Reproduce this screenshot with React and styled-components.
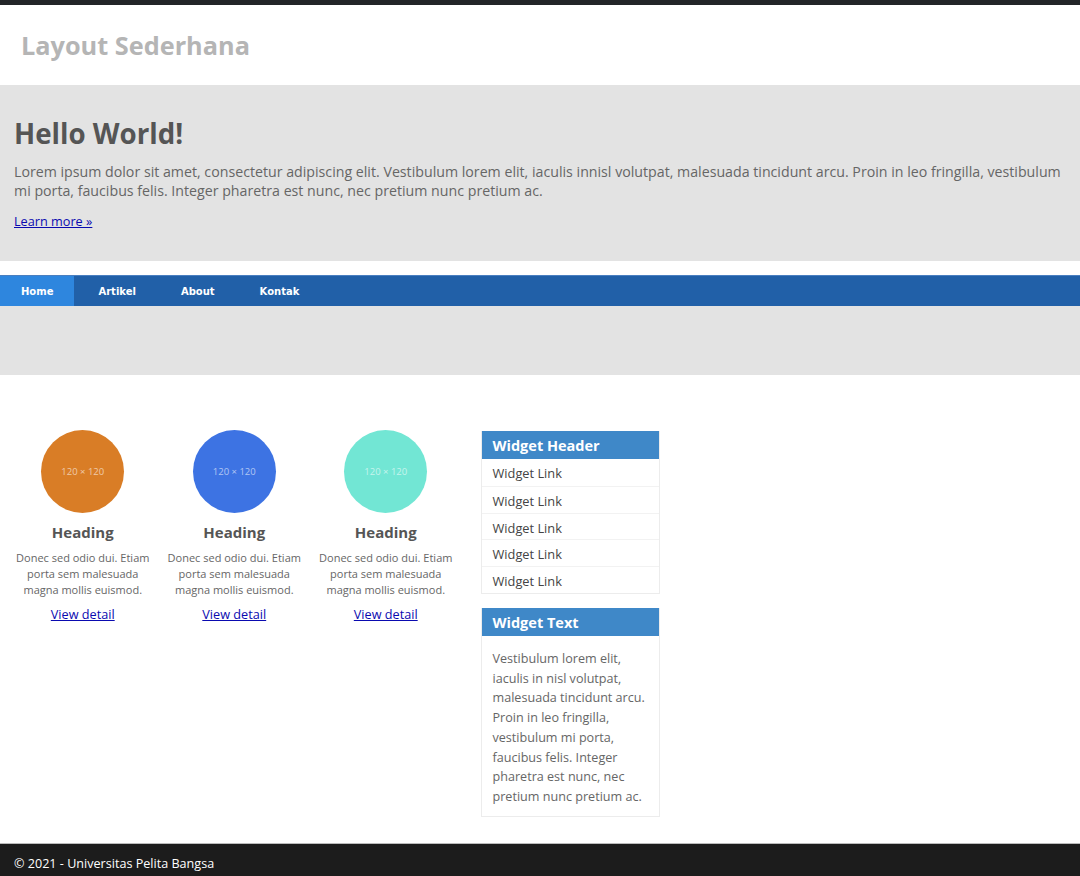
import React from "react";
import styled, { createGlobalStyle } from "styled-components";

const Global = createGlobalStyle`
  html, body { margin: 0; padding: 0; background: #fff; }
  body { font-family: "Open Sans", "Liberation Sans", sans-serif; color: #555; }
  * { box-sizing: border-box; }
`;

const Page = styled.div`
  border-top: 5px solid #222528;
  min-height: 876px;
  display: flex;
  flex-direction: column;
`;

const Header = styled.header`
  height: 80px;
  display: flex;
  align-items: center;
  padding-left: 21px;
`;

const SiteTitle = styled.h1`
  margin: 0;
  font-size: 25.3px;
  font-weight: 700;
  color: #b5b5b5;
  line-height: 1;
  padding-top: 2px;
`;

const Hero = styled.section`
  background: #e3e3e3;
  height: 176px;
  padding: 30px 14px 0;
`;

const HeroTitle = styled.h2`
  margin: 0 0 11px;
  font-size: 27.7px;
  line-height: 36px;
  font-weight: 700;
  color: #555;
`;

const HeroText = styled.p`
  margin: 0 0 8px;
  font-size: 14.2px;
  line-height: 19.3px;
  color: #666;
`;

const TextLink = styled.a`
  color: #0a0ab0;
  text-decoration: underline;
  font-size: 12.7px;
`;

const Nav = styled.nav`
  margin-top: 14px;
  height: 31px;
  background: #2160a8;
  display: flex;
  border-top: 1px solid #4a7fc0;
`;

const NavItem = styled.a`
  font-family: "DejaVu Sans", Verdana, sans-serif;
  font-weight: 700;
  font-size: 10px;
  color: #fff;
  text-decoration: none;
  display: flex;
  align-items: center;
  padding: 0 21px 0 ${(p) => (p.$active ? 21 : 24)}px;
  background: ${(p) => (p.$active ? "#2e86de" : "transparent")};
`;

const Band = styled.div`
  background: #e3e3e3;
  height: 69px;
`;

const Content = styled.main`
  flex: 1;
  display: flex;
  align-items: flex-start;
  padding: 55px 0 26px 7px;
  gap: 19px;
`;

const Cards = styled.div`
  display: grid;
  grid-template-columns: repeat(3, 151.5px);
`;

const Card = styled.div`
  display: flex;
  flex-direction: column;
  align-items: center;
  text-align: center;
  padding: 0 8px;
`;

const Circle = styled.div`
  width: 83px;
  height: 83px;
  border-radius: 50%;
  background: ${(p) => p.$color};
  color: rgba(255, 255, 255, 0.6);
  font-size: 9.5px;
  display: flex;
  align-items: center;
  justify-content: center;
`;

const CardTitle = styled.h3`
  margin: 9px 0 8px;
  font-size: 15px;
  line-height: 20px;
  font-weight: 700;
  color: #555;
`;

const CardText = styled.p`
  margin: 0 0 7px;
  font-size: 11px;
  line-height: 16px;
  color: #666;
`;

const Sidebar = styled.aside`
  width: 179px;
  display: flex;
  flex-direction: column;
  gap: 14px;
  margin-top: 1px;
`;

const Widget = styled.div`
  border: 1px solid #ececec;
  border-top: none;
`;

const WidgetHead = styled.div`
  background: #3f88c8;
  color: #fff;
  font-weight: 700;
  font-size: 14.5px;
  height: 28px;
  display: flex;
  align-items: center;
  padding-left: 11px;
  padding-top: ${(p) => p.$nudge || 0}px;
`;

const WidgetLink = styled.a`
  display: block;
  height: 26.8px;
  line-height: 28px;
  padding-left: 11px;
  font-size: 12.8px;
  color: #444;
  text-decoration: none;
  border-top: ${(p) => (p.$first ? "none" : "1px solid #f2f2f2")};
`;

const WidgetBody = styled.p`
  margin: 0;
  padding: 13px 5px 9px 11px;
  font-size: 12.6px;
  line-height: 19.7px;
  color: #666;
`;

const Footer = styled.footer`
  background: #1c1c1c;
  height: 33px;
  border-top: 1px solid #bbb;
  color: #fff;
  font-size: 12.6px;
  display: flex;
  align-items: center;
  padding-left: 14px;
  padding-top: 6px;
`;

const cards = ["#d97d26", "#3d73e3", "#72e6d4"];

export default function App() {
  return (
    <>
      <Global />
      <Page>
        <Header>
          <SiteTitle>Layout Sederhana</SiteTitle>
        </Header>
        <Hero>
          <HeroTitle>Hello World!</HeroTitle>
          <HeroText>
            Lorem ipsum dolor sit amet, consectetur adipiscing elit. Vestibulum lorem elit, iaculis innisl volutpat,
            malesuada tincidunt arcu. Proin in leo fringilla, vestibulum mi porta, faucibus felis. Integer pharetra est
            nunc, nec pretium nunc pretium ac.
          </HeroText>
          <TextLink href="#">Learn more »</TextLink>
        </Hero>
        <Nav>
          <NavItem $active>Home</NavItem>
          <NavItem>Artikel</NavItem>
          <NavItem>About</NavItem>
          <NavItem>Kontak</NavItem>
        </Nav>
        <Band />
        <Content>
          <Cards>
            {cards.map((c) => (
              <Card key={c}>
                <Circle $color={c}>120 × 120</Circle>
                <CardTitle>Heading</CardTitle>
                <CardText>Donec sed odio dui. Etiam porta sem malesuada magna mollis euismod.</CardText>
                <TextLink href="#">View detail</TextLink>
              </Card>
            ))}
          </Cards>
          <Sidebar>
            <Widget>
              <WidgetHead>Widget Header</WidgetHead>
              {[0, 1, 2, 3, 4].map((i) => (
                <WidgetLink key={i} $first={i === 0} href="#">
                  Widget Link
                </WidgetLink>
              ))}
            </Widget>
            <Widget>
              <WidgetHead $nudge={2}>Widget Text</WidgetHead>
              <WidgetBody>
                Vestibulum lorem elit, iaculis in nisl volutpat, malesuada tincidunt arcu. Proin in leo fringilla,
                vestibulum mi porta, faucibus felis. Integer pharetra est nunc, nec pretium nunc pretium ac.
              </WidgetBody>
            </Widget>
          </Sidebar>
        </Content>
        <Footer>© 2021 - Universitas Pelita Bangsa</Footer>
      </Page>
    </>
  );
}
